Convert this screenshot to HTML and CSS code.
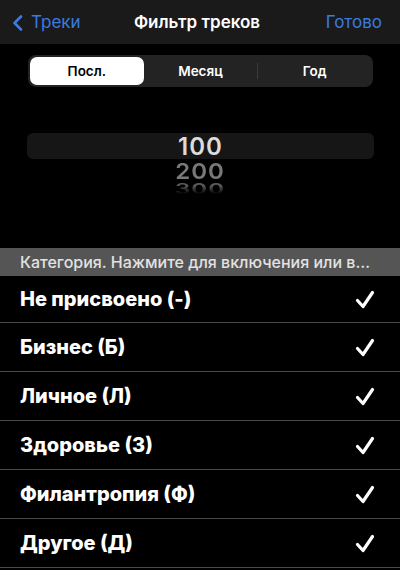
FILE: index.html
```html
<!DOCTYPE html>
<html lang="ru">
<head>
<meta charset="utf-8">
<link rel="stylesheet" href="styles.css">
</head>
<body>
<div class="screen">
  <header class="nav">
    <div class="nav-back">
      <svg class="chev" width="11" height="16" viewBox="0 0 11 16"><path d="M9 1.5 L2.5 8 L9 14.5" fill="none" stroke="#3b7ae0" stroke-width="2.6" stroke-linecap="round" stroke-linejoin="round"/></svg>
      <span>Треки</span>
    </div>
    <div class="nav-title">Фильтр треков</div>
    <div class="nav-done">Готово</div>
  </header>

  <div class="segmented">
    <div class="seg seg-active">Посл.</div>
    <div class="seg">Месяц</div>
    <div class="seg seg-divided">Год</div>
  </div>

  <div class="picker">
    <div class="picker-band">100</div>
    <div class="picker-next">200</div>
    <div class="picker-far"><span>300</span></div>
  </div>

  <div class="section-header">Категория. Нажмите для включения или выключения</div>

  <ul class="list">
    <li class="row"><span>Не присвоено (-)</span><svg class="check" width="20" height="19" viewBox="0 0 20 19"><path d="M2.5 10.5 L8 16.5 L17.5 2.5" fill="none" stroke="#fff" stroke-width="3.2" stroke-linecap="round" stroke-linejoin="round"/></svg></li>
    <li class="row"><span>Бизнес (Б)</span><svg class="check" width="20" height="19" viewBox="0 0 20 19"><path d="M2.5 10.5 L8 16.5 L17.5 2.5" fill="none" stroke="#fff" stroke-width="3.2" stroke-linecap="round" stroke-linejoin="round"/></svg></li>
    <li class="row"><span>Личное (Л)</span><svg class="check" width="20" height="19" viewBox="0 0 20 19"><path d="M2.5 10.5 L8 16.5 L17.5 2.5" fill="none" stroke="#fff" stroke-width="3.2" stroke-linecap="round" stroke-linejoin="round"/></svg></li>
    <li class="row"><span>Здоровье (З)</span><svg class="check" width="20" height="19" viewBox="0 0 20 19"><path d="M2.5 10.5 L8 16.5 L17.5 2.5" fill="none" stroke="#fff" stroke-width="3.2" stroke-linecap="round" stroke-linejoin="round"/></svg></li>
    <li class="row"><span>Филантропия (Ф)</span><svg class="check" width="20" height="19" viewBox="0 0 20 19"><path d="M2.5 10.5 L8 16.5 L17.5 2.5" fill="none" stroke="#fff" stroke-width="3.2" stroke-linecap="round" stroke-linejoin="round"/></svg></li>
    <li class="row"><span>Другое (Д)</span><svg class="check" width="20" height="19" viewBox="0 0 20 19"><path d="M2.5 10.5 L8 16.5 L17.5 2.5" fill="none" stroke="#fff" stroke-width="3.2" stroke-linecap="round" stroke-linejoin="round"/></svg></li>
  </ul>
</div>
</body>
</html>
```

FILE: styles.css
```css
* { box-sizing: border-box; }
html, body {
  margin: 0;
  padding: 0;
  background: #000;
}
body {
  font-family: "Inter", "Liberation Sans", "DejaVu Sans", sans-serif;
  color: #fff;
}
.screen {
  width: 400px;
  height: 570px;
  overflow: hidden;
  background: #000;
}

/* nav bar */
.nav {
  height: 44px;
  background: #1a1a1a;
  display: grid;
  grid-template-columns: 1fr auto 1fr;
  align-items: center;
  padding: 0 18px 0 12px;
}
.nav-back {
  display: flex;
  align-items: center;
  gap: 8px;
  color: #3b7ae0;
  font-size: 17px;
}
.chev { display: block; margin-top: 1px; }
.nav-title {
  font-size: 17px;
  font-weight: 600;
  color: #fff;
}
.nav-done {
  justify-self: end;
  font-size: 17px;
  color: #3b7ae0;
}

/* segmented control */
.segmented {
  margin: 11px 27px 0 28px;
  height: 32px;
  background: #232323;
  border-radius: 8px;
  padding: 2px;
  display: grid;
  grid-template-columns: 1fr 1fr 1fr;
}
.seg {
  display: flex;
  align-items: center;
  justify-content: center;
  font-size: 13.5px;
  font-weight: 600;
  color: #fff;
  border-radius: 7px;
}
.seg-active {
  background: #fff;
  color: #000;
}
.seg-divided {
  border-left: 1px solid #3a3a3a;
  border-radius: 0 7px 7px 0;
  margin: 6px 0;
}

/* picker */
.picker {
  height: 161px;
  padding-top: 46px;
  display: flex;
  flex-direction: column;
  align-items: center;
}
.picker-band {
  align-self: stretch;
  margin: 0 26px 0 27px;
  height: 26px;
  background: #161616;
  border-radius: 6px;
  text-align: center;
  font-size: 24px;
  font-weight: 600;
  letter-spacing: 1px;
  line-height: 27px;
  color: #dcdcdc;
}
.picker-next {
  font-size: 24px;
  font-weight: 600;
  letter-spacing: 1px;
  line-height: 22px;
  margin-top: 2px;
  color: #787878;
  transform: scaleY(0.92);
}
.picker-far {
  height: 11px;
  overflow: hidden;
  -webkit-mask-image: linear-gradient(to bottom, #000 25%, transparent 100%);
  mask-image: linear-gradient(to bottom, #000 25%, transparent 100%);
}
.picker-far span {
  display: block;
  font-size: 24px;
  font-weight: 600;
  letter-spacing: 1px;
  line-height: 20px;
  color: #5a5a5a;
  transform: scaleY(0.62);
  transform-origin: top;
}

/* section header */
.section-header {
  height: 28px;
  background: #555;
  color: #e2e2e2;
  font-size: 16px;
  font-weight: 500;
  line-height: 28px;
  padding: 0 26px 0 20px;
  white-space: nowrap;
  overflow: hidden;
  text-overflow: ellipsis;
}

/* list */
.list {
  list-style: none;
  margin: 0;
  padding: 0;
}
.row {
  height: 49px;
  border-bottom: 1px solid #4a4a4a;
  display: flex;
  align-items: center;
  justify-content: space-between;
  padding: 0 25px 0 20px;
  font-size: 20px;
  font-weight: 800;
}
.row:first-child { height: 47px; }
.check { display: block; }
```
